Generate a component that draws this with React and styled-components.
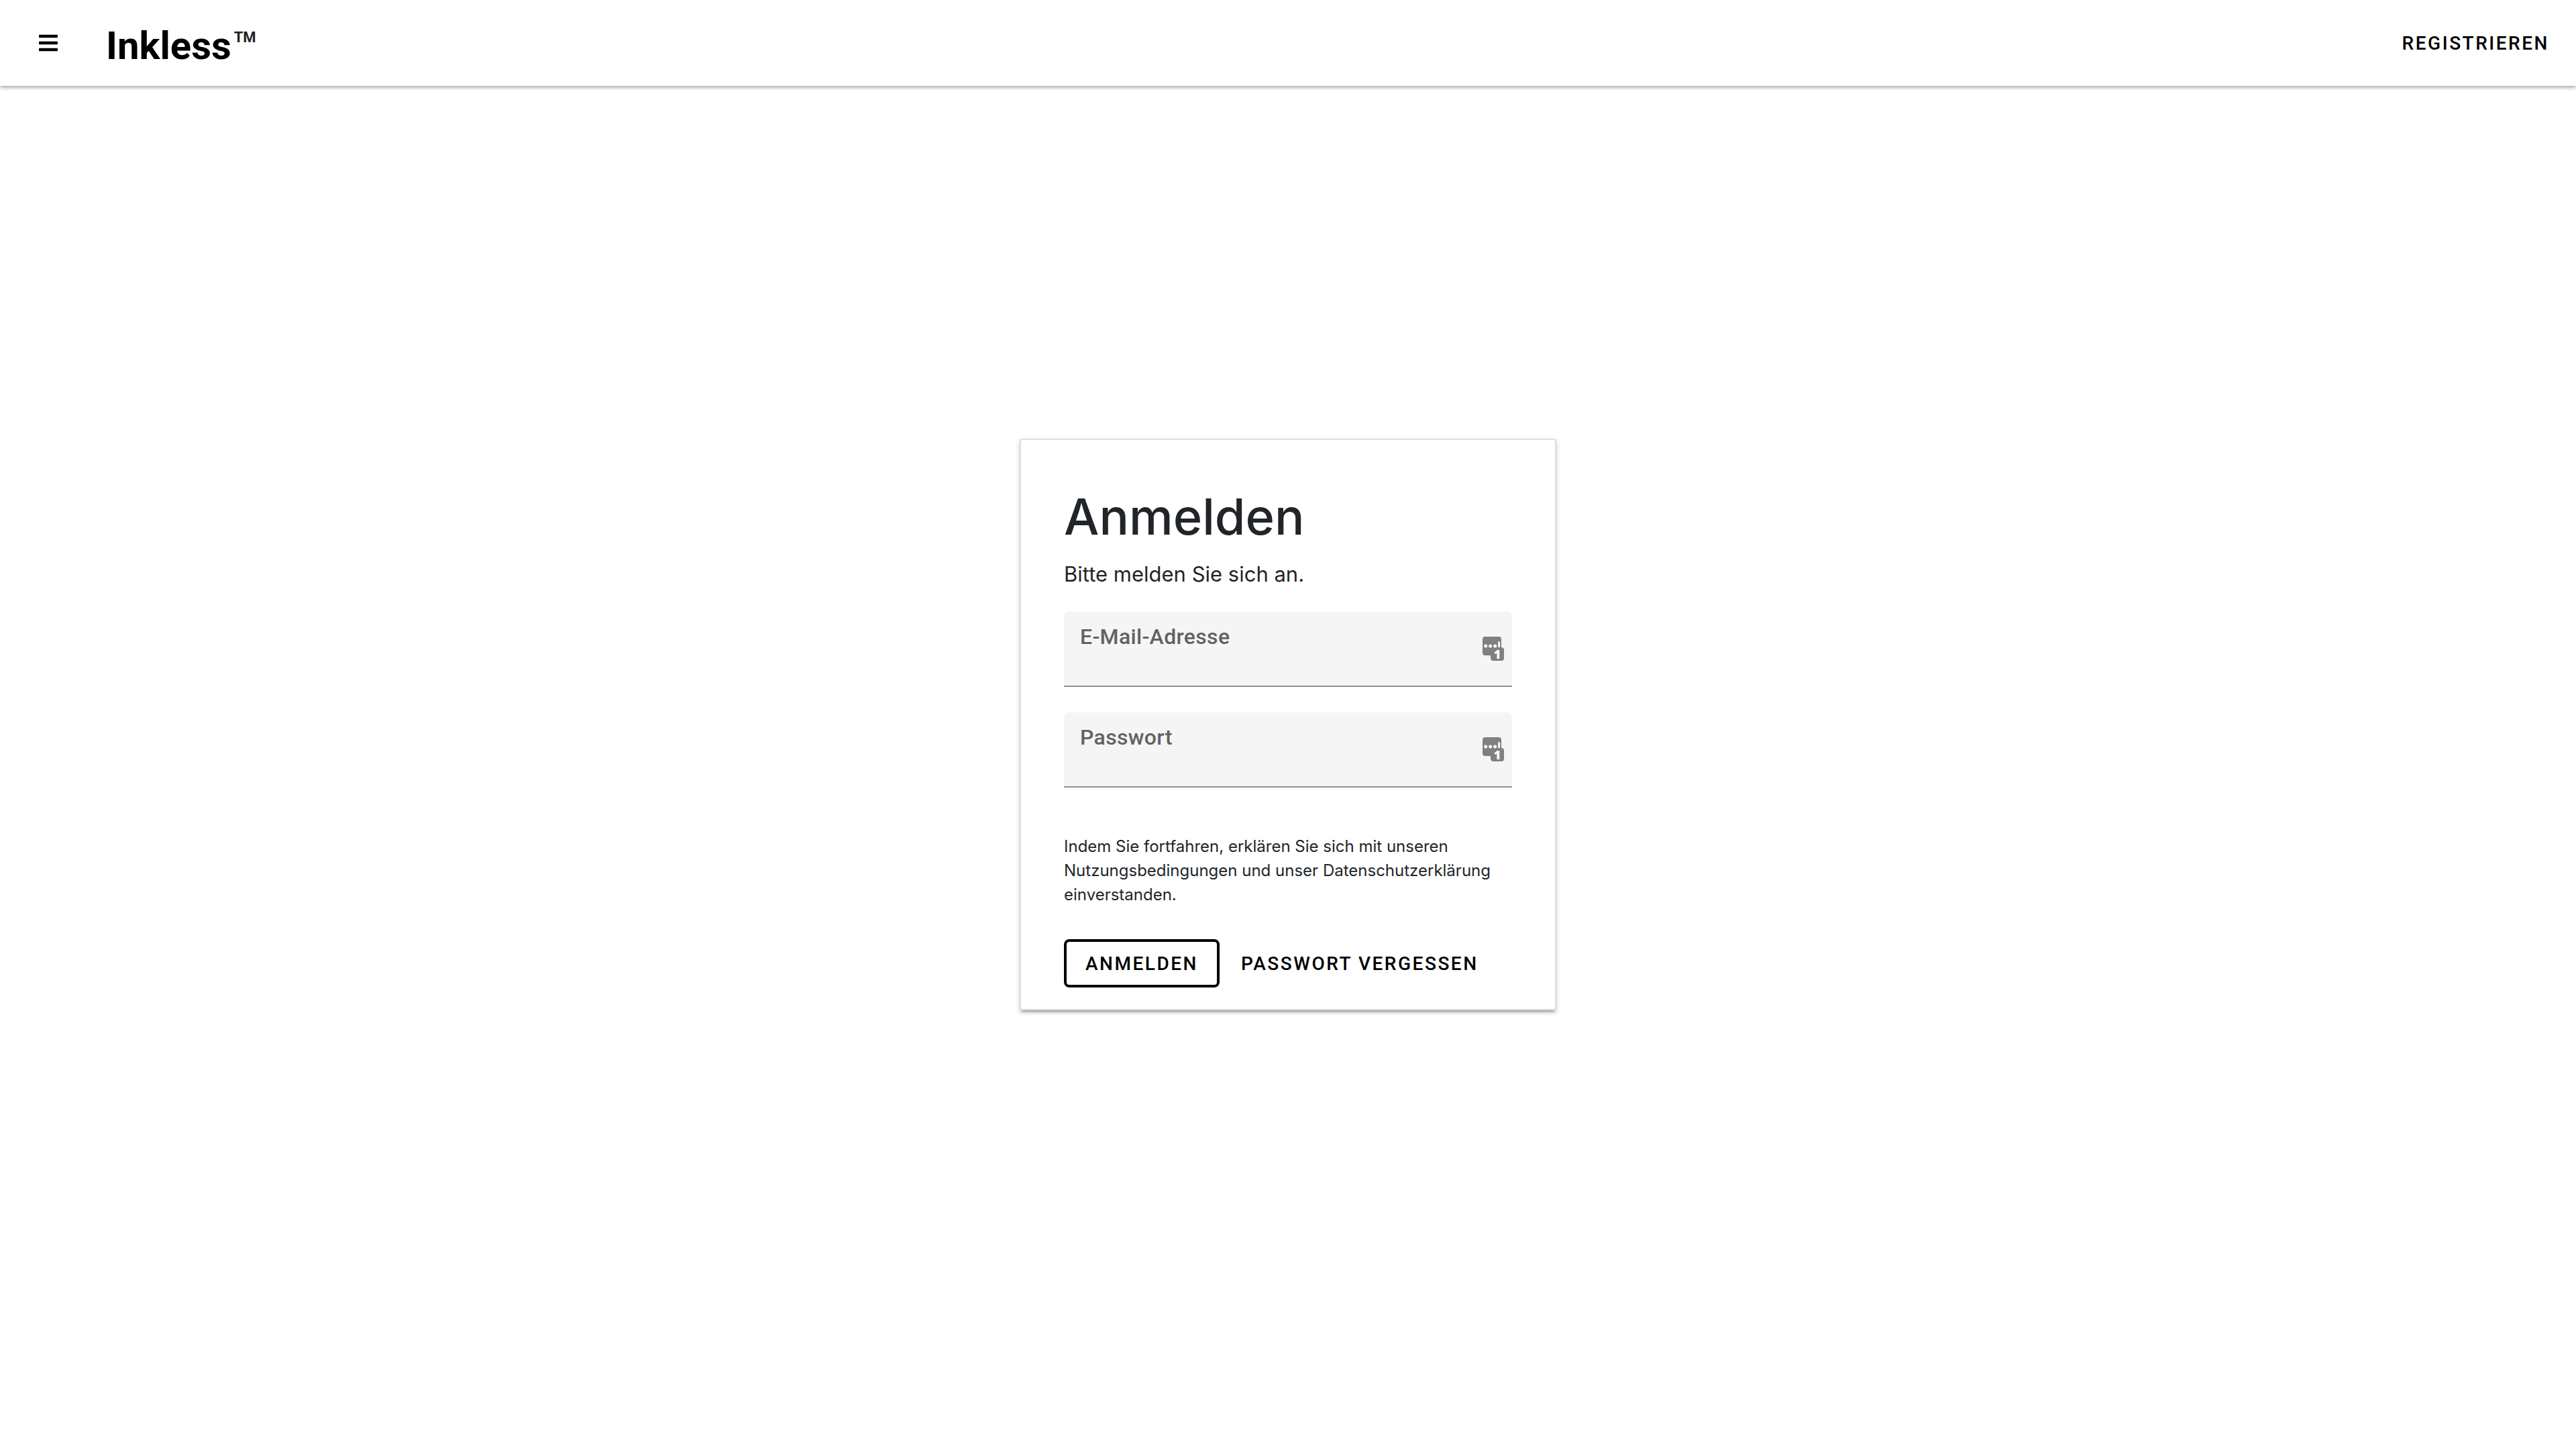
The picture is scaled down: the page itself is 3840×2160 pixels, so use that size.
import React from "react";
import styled, { createGlobalStyle } from "styled-components";
import { FaBars } from "react-icons/fa";

const GlobalStyle = createGlobalStyle`
  *, *::before, *::after { box-sizing: border-box; }
  body {
    margin: 0;
    background: #fff;
    color: #212529;
    font-family: Inter, "Liberation Sans", sans-serif;
    font-size: 31px;
    line-height: 48px;
  }
`;

const Page = styled.div`
  display: flex;
  flex-direction: column;
  min-height: 100vh;
`;

const TopBar = styled.header`
  display: flex;
  align-items: center;
  justify-content: space-between;
  height: 128px;
  padding: 0 24px 0 56px;
  background: #fff;
  box-shadow: 0 2px 6px rgba(0, 0, 0, 0.4);
`;

const Brand = styled.div`
  display: flex;
  align-items: center;
  gap: 70px;
`;

const MenuButton = styled.button`
  display: flex;
  padding: 0;
  border: 0;
  background: none;
  color: #000;
  font-size: 32px;
  cursor: pointer;
`;

const Logo = styled.a`
  display: flex;
  align-items: flex-start;
  gap: 4px;
  padding-top: 8px;
  color: #000;
  font: 700 58px/72px Roboto, sans-serif;
  text-decoration: none;
`;

const Mark = styled.sup`
  color: #222;
  font-size: 22px;
  line-height: 48px;
`;

const Button = styled.button`
  height: 72px;
  padding: 2px ${(p) => (p.$outlined ? "28px" : "16px")} 0;
  border: ${(p) => (p.$outlined ? "4px solid #000" : "0")};
  border-radius: 8px;
  background: none;
  color: #000;
  font: 500 28px/60px Roboto, sans-serif;
  letter-spacing: 0.09em;
  text-transform: uppercase;
  cursor: pointer;
`;

const Main = styled.main`
  flex: 1;
  display: flex;
  align-items: center;
  justify-content: center;
  padding-bottom: 128px;
`;

const Card = styled.form`
  width: 100%;
  max-width: 800px;
  padding: 66px 64px 32px;
  border: 2px solid #dfdfdf;
  border-radius: 4px;
  background: #fff;
  box-shadow:
    0 6px 2px -4px rgba(0, 0, 0, 0.2),
    0 4px 4px 0 rgba(0, 0, 0, 0.14),
    0 2px 10px 0 rgba(0, 0, 0, 0.12);
`;

const Title = styled.h1`
  margin: 0 0 14px;
  font-size: 74px;
  font-weight: 500;
  line-height: 96px;
`;

const Intro = styled.p`
  margin: 0 0 32px;
`;

const Fields = styled.div`
  display: flex;
  flex-direction: column;
  gap: 38px;
`;

const Field = styled.div`
  display: flex;
  align-items: center;
  height: 112px;
  padding: 0 12px 0 24px;
  border-bottom: 2px solid #8e8e8e;
  border-radius: 8px 8px 0 0;
  background: #f5f5f5;
`;

const Entry = styled.div`
  flex: 1;
  display: flex;
  flex-direction: column;
  align-self: stretch;
  padding-top: 16px;
`;

const Label = styled.label`
  color: #626262;
  font: 500 32px/42px Roboto, sans-serif;
  letter-spacing: 0.01em;
`;

const Input = styled.input`
  flex: 1;
  min-height: 0;
  width: 100%;
  padding: 0;
  border: 0;
  outline: 0;
  background: none;
  color: #212529;
  font: 400 32px/40px Roboto, sans-serif;
`;

const FieldIcon = styled.svg`
  flex: none;
  overflow: visible;
`;

const Legal = styled.p`
  margin: 70px 0 48px;
  font-size: 24px;
  line-height: 36px;
`;

const Actions = styled.div`
  display: flex;
  gap: 16px;
`;

function PasswordManagerIcon() {
  return (
    <FieldIcon width="32" height="36" viewBox="0 0 32 36" aria-hidden="true">
      <path
        fill="#808080"
        d="M4 0h20a4 4 0 0 1 4 4v12a4 4 0 0 1 4 4v12a4 4 0 0 1-4 4H16a4 4 0 0 1-4-4v-4H4a4 4 0 0 1-4-4V4a4 4 0 0 1 4-4z"
      />
      <g fill="#fff">
        <circle cx="4.7" cy="14" r="2.5" />
        <circle cx="11.7" cy="14" r="2.5" />
        <circle cx="18.7" cy="14" r="2.5" />
        <path d="M23.2 8.5a1.4 1.4 0 0 1 2.8 0V16h-2.8z" />
        <text x="22" y="33" textAnchor="middle" fontFamily="Open Sans, sans-serif" fontWeight="800" fontSize="18">
          1
        </text>
      </g>
    </FieldIcon>
  );
}

function TextField({ id, label, type }) {
  return (
    <Field>
      <Entry>
        <Label htmlFor={id}>{label}</Label>
        <Input id={id} name={id} type={type} />
      </Entry>
      <PasswordManagerIcon />
    </Field>
  );
}

export default function App() {
  return (
    <>
      <GlobalStyle />
      <Page>
        <TopBar>
          <Brand>
            <MenuButton type="button" aria-label="Menü">
              <FaBars />
            </MenuButton>
            <Logo href="#">
              Inkless<Mark>TM</Mark>
            </Logo>
          </Brand>
          <Button type="button">Registrieren</Button>
        </TopBar>
        <Main>
          <Card onSubmit={(event) => event.preventDefault()}>
            <Title>Anmelden</Title>
            <Intro>Bitte melden Sie sich an.</Intro>
            <Fields>
              <TextField id="email" label="E-Mail-Adresse" type="email" />
              <TextField id="password" label="Passwort" type="password" />
            </Fields>
            <Legal>
              Indem Sie fortfahren, erklären Sie sich mit unseren Nutzungsbedingungen und unser
              Datenschutzerklärung einverstanden.
            </Legal>
            <Actions>
              <Button type="submit" $outlined>
                Anmelden
              </Button>
              <Button type="button">Passwort vergessen</Button>
            </Actions>
          </Card>
        </Main>
      </Page>
    </>
  );
}
